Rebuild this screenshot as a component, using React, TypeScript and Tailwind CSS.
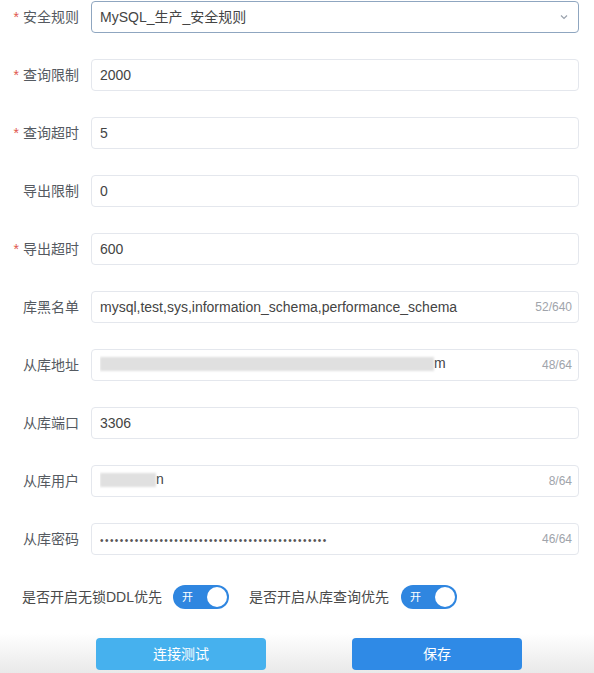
import React from "react";

const font = { fontFamily: '"Liberation Sans", "Noto Sans CJK SC", sans-serif' };

interface RowProps {
  label: string;
  required?: boolean;
  children: React.ReactNode;
}

const Row: React.FC<RowProps> = ({ label, required, children }) => (
  <div className="flex items-center h-8">
    <label className="w-[91px] shrink-0 pr-[12px] text-right text-[14px] text-[#555a61]">
      {required && <span className="text-[#e0574f] mr-1">*</span>}
      {label}
    </label>
    <div className="w-[488px]">{children}</div>
  </div>
);

const Input: React.FC<{ value?: React.ReactNode; count?: string; focus?: boolean; select?: boolean }> = ({
  value,
  count,
  focus,
  select,
}) => (
  <div
    className={`flex items-center h-8 rounded border bg-white pl-[8px] pr-[6px] ${
      focus ? "border-[#8fa6c0]" : "border-[#e4e7ed]"
    }`}
  >
    <div className="flex-1 text-[14px] text-[#444] whitespace-nowrap overflow-hidden">{value}</div>
    {count && <span className="text-[12px] text-[#a0a4ab]">{count}</span>}
    {select && (
      <svg width="12" height="12" viewBox="0 0 12 12" className="mr-[2px]">
        <path d="M3 4.5 L6 7.5 L9 4.5" fill="none" stroke="#9aa2ad" strokeWidth="1.2" />
      </svg>
    )}
  </div>
);

const Blur: React.FC<{ w: number; tail: string }> = ({ w, tail }) => (
  <span className="inline-flex items-center">
    <span className="inline-block h-[14px] bg-[#e0e0e0] blur-[1px]" style={{ width: w }} />
    <span>{tail}</span>
  </span>
);

const Toggle: React.FC = () => (
  <div className="relative flex items-center w-[56px] h-[24px] rounded-full bg-[#2f86e0]">
    <span className="ml-[9px] text-[11px] text-white">开</span>
    <span className="absolute right-[2px] top-[2px] w-[20px] h-[20px] rounded-full bg-white" />
  </div>
);

export default function App() {
  return (
    <div className="w-[594px] h-[673px] bg-white relative overflow-hidden" style={font}>
      <div className="flex flex-col gap-[26px] pt-[1px]">
        <Row label="安全规则" required>
          <Input value="MySQL_生产_安全规则" focus select />
        </Row>
        <Row label="查询限制" required>
          <Input value="2000" />
        </Row>
        <Row label="查询超时" required>
          <Input value="5" />
        </Row>
        <Row label="导出限制">
          <Input value="0" />
        </Row>
        <Row label="导出超时" required>
          <Input value="600" />
        </Row>
        <Row label="库黑名单">
          <Input value="mysql,test,sys,information_schema,performance_schema" count="52/640" />
        </Row>
        <Row label="从库地址">
          <Input value={<Blur w={334} tail="m" />} count="48/64" />
        </Row>
        <Row label="从库端口">
          <Input value="3306" />
        </Row>
        <Row label="从库用户">
          <Input value={<Blur w={56} tail="n" />} count="8/64" />
        </Row>
        <Row label="从库密码">
          <Input
            value={<span className="text-[10px] tracking-[1.45px] text-[#555]">{"•".repeat(46)}</span>}
            count="46/64"
          />
        </Row>
      </div>

      <div className="flex items-center mt-[30px] pl-[22px] text-[14px] text-[#4a4a4a]">
        <span>是否开启无锁DDL优先</span>
        <div className="ml-[11px]">
          <Toggle />
        </div>
        <span className="ml-[20px]">是否开启从库查询优先</span>
        <div className="ml-[12px]">
          <Toggle />
        </div>
      </div>

      <div className="absolute left-0 right-0 bottom-0 h-[40px] bg-gradient-to-b from-white to-[#e9e9e9]" />
      <div className="relative flex mt-[29px] pl-[96px] gap-[86px]">
        <button className="w-[170px] h-[32px] rounded bg-[#46b1ee] text-white text-[14px]">连接测试</button>
        <button className="w-[170px] h-[32px] rounded bg-[#2f8ae6] text-white text-[14px]">保存</button>
      </div>
    </div>
  );
}
